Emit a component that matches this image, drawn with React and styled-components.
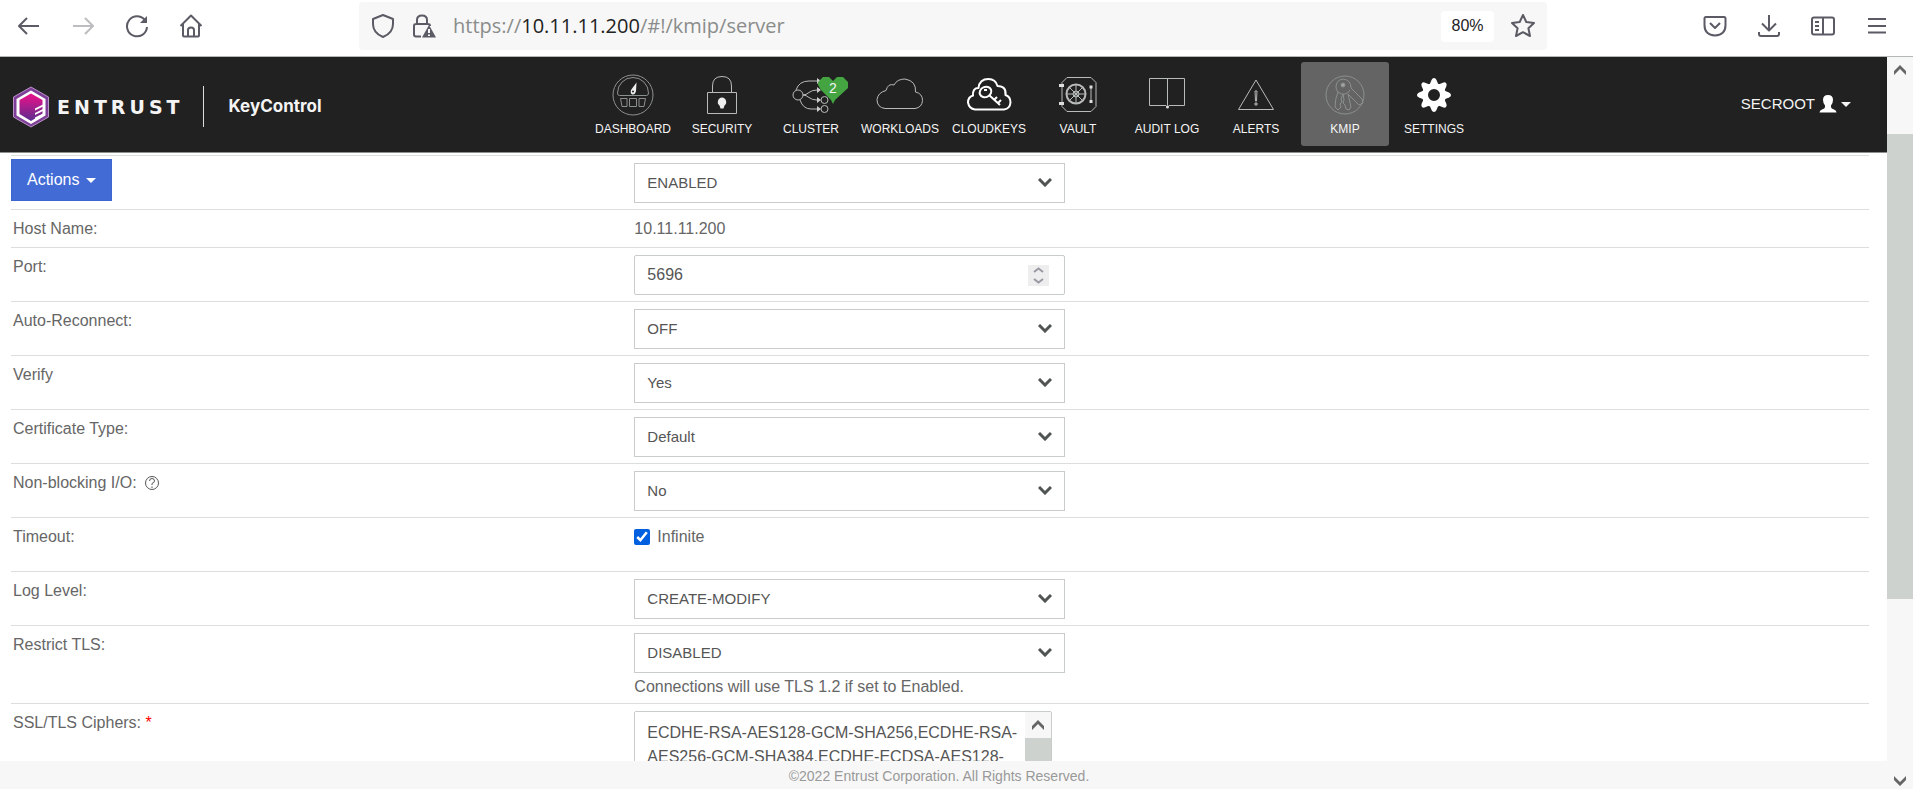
import React, { useState } from 'react';
import styled, { createGlobalStyle } from 'styled-components';

const states = ['ENABLED', 'DISABLED'];
const ciphers = 'ECDHE-RSA-AES128-GCM-SHA256,ECDHE-RSA-AES256-GCM-SHA384,ECDHE-ECDSA-AES128-GCM-SHA256,ECDHE-ECDSA-AES256-GCM-SHA384';

const navItems = [
    { label: 'DASHBOARD', icon: <DashboardIcon /> },
    { label: 'SECURITY', icon: <SecurityIcon /> },
    { label: 'CLUSTER', icon: <ClusterIcon />, badge: 2 },
    { label: 'WORKLOADS', icon: <WorkloadsIcon /> },
    { label: 'CLOUDKEYS', icon: <CloudKeysIcon /> },
    { label: 'VAULT', icon: <VaultIcon /> },
    { label: 'AUDIT LOG', icon: <AuditIcon /> },
    { label: 'ALERTS', icon: <AlertsIcon /> },
    { label: 'KMIP', icon: <KmipIcon />, active: true },
    { label: 'SETTINGS', icon: <SettingsIcon /> },
];

function App() {
    return (
        <Window>
            <GlobalStyle />
            <BrowserBar />
            <Viewport>
                <Page>
                    <Header />
                    <ServerForm />
                    <Footer>©2022 Entrust Corporation. All Rights Reserved.</Footer>
                </Page>
                <ScrollBar before={51} thumb={465} after={164} />
            </Viewport>
        </Window>
    )
}

export default App

function BrowserBar() {
    return (
        <Toolbar>
            <ToolGroup>
                <ToolButton aria-label="Back">
                    <Line d="M22 12H2M10 4L2 12l8 8" />
                </ToolButton>
                <ToolButton aria-label="Forward" $dim>
                    <Line d="M2 12h20M14 4l8 8-8 8" />
                </ToolButton>
                <ToolButton aria-label="Reload">
                    <svg viewBox="0 0 24 24">
                        <path d="M20.5 7A10 10 0 1 0 22 13" />
                        <path d="M22 2v7h-7z" fill="currentColor" stroke="none" />
                    </svg>
                </ToolButton>
                <ToolButton aria-label="Home">
                    <Line d="M1.500 12L12 1.500 22.500 12M4 10v11.500q0 1 1 1h14q1 0 1-1V10M9 22v-6q0-2.500 3-2.500t3 2.500v6" />
                </ToolButton>
            </ToolGroup>
            <AddressBar>
                <ToolButton aria-label="Tracking protection">
                    <Line d="M12 1l10 4v5q0 9-10 13Q2 19 2 10V5z" />
                </ToolButton>
                <ToolButton aria-label="Connection is not secure">
                    <svg viewBox="0 0 24 24">
                        <path d="M5 10V6q0-4.500 5-4.500T15 6v4M9 22.500H4q-2 0-2-2V12q0-2 2-2h12q2 0 2 2" />
                        <path d="M17 11l7 12.500H10z" fill="currentColor" stroke="none" />
                        <path d="M17 15v4M17 20.500v1.500" stroke="#f7f7f7" />
                    </svg>
                </ToolButton>
                <Address>https://<b>10.11.11.200</b>/#!/kmip/server</Address>
                <Zoom>80%</Zoom>
                <ToolButton aria-label="Bookmark this page">
                    <Line d="M12 1l3.300 7 7.700 1-5.600 5.300L19 22l-7-3.800L5 22l1.600-7.700L1 9l7.700-1z" />
                </ToolButton>
            </AddressBar>
            <ToolGroup $end>
                <ToolButton aria-label="Save to Pocket">
                    <Line d="M3 3h18q1.500 0 1.500 1.500V11q0 10-10.500 10.500Q1.500 21 1.500 11V4.500Q1.500 3 3 3zM7 9l5 5 5-5" />
                </ToolButton>
                <ToolButton aria-label="Downloads">
                    <Line d="M12 1v15M5 9.500l7 7 7-7M2 18v2q0 2 2 2h16q2 0 2-2v-2" />
                </ToolButton>
                <ToolButton aria-label="Sidebar">
                    <Line d="M3 3.500h18q2 0 2 2v13q0 2-2 2H3q-2 0-2-2v-13q0-2 2-2zM12 3.500v17M4 8h4M4 12h4M4 16h4" />
                </ToolButton>
                <ToolButton aria-label="Menu">
                    <Line d="M3 5h18M3 12h18M3 18.500h18" />
                </ToolButton>
            </ToolGroup>
        </Toolbar>
    )
}

function Header() {
    return (
        <TopBar>
            <Brand>
                <LogoIcon />
                <WordMark>ENTRUST</WordMark>
                <Product>KeyControl</Product>
            </Brand>
            <Nav>
                {navItems.map((item) => (
                    <NavLink href="#" key={item.label} $active={item.active}>
                        {item.icon}
                        {item.label}
                        {item.badge && (
                            <Badge>
                                <svg viewBox="0 0 30 28">
                                    <path d="M0 9V6L5 1h6l4 4 4-4h6l5 5v6L17 24l-2 4-2-4L3 14z" fill="#43a441" />
                                </svg>
                                <span>{item.badge}</span>
                            </Badge>
                        )}
                    </NavLink>
                ))}
            </Nav>
            <UserMenu>
                SECROOT
                <svg width="18" height="18" viewBox="0 0 18 18">
                    <path d="M9 0q5 0 5 5 0 3-2 5.500V12q0 1.500 3 2.500 2.500 1 2.500 3H.500q0-2 2.500-3 3-1 3-2.500v-1.500Q4 8 4 5q0-5 5-5z" fill="#fff" />
                </svg>
                <Caret />
            </UserMenu>
        </TopBar>
    )
}

function ServerForm() {
    const [ infinite, setInfinite ] = useState(true);

    return (
        <Form onSubmit={(e) => e.preventDefault()}>
            <Row>
                <ActionsCell>
                    <ActionsButton type="button">Actions <Caret /></ActionsButton>
                </ActionsCell>
                <Cell>
                    <SelectBox id="state" label="State" options={states} />
                </Cell>
            </Row>
            <Row>
                <Label as="span">Host Name:</Label>
                <Cell>10.11.11.200</Cell>
            </Row>
            <Row>
                <Label htmlFor="port">Port:</Label>
                <Cell>
                    <Control>
                        <PortInput id="port" type="number" defaultValue="5696" />
                        <Spinner viewBox="0 0 21 21">
                            <path d="M6 7l4.500-3.500L15 7M6 14l4.500 3.500L15 14" />
                        </Spinner>
                    </Control>
                </Cell>
            </Row>
            <Row>
                <Label htmlFor="reconnect">Auto-Reconnect:</Label>
                <Cell><SelectBox id="reconnect" options={['OFF', 'ON']} /></Cell>
            </Row>
            <Row>
                <Label htmlFor="verify">Verify</Label>
                <Cell><SelectBox id="verify" options={['Yes', 'No']} /></Cell>
            </Row>
            <Row>
                <Label htmlFor="cert">Certificate Type:</Label>
                <Cell><SelectBox id="cert" options={['Default', 'Custom']} /></Cell>
            </Row>
            <Row>
                <Label htmlFor="nbio">
                    Non-blocking I/O:
                    <HelpIcon viewBox="0 0 16 16">
                        <circle cx="8" cy="8" r="6.500" />
                        <path d="M5.500 6q0-2.500 2.500-2.500T10.500 6Q10.500 7.500 8 8.500V10M8 11.500V13" />
                    </HelpIcon>
                </Label>
                <Cell><SelectBox id="nbio" options={['No', 'Yes']} /></Cell>
            </Row>
            <Row>
                <Label as="span">Timeout:</Label>
                <Cell>
                    <CheckLabel>
                        <CheckBox checked={infinite} onChange={(e) => setInfinite(e.target.checked)} />
                        Infinite
                    </CheckLabel>
                </Cell>
            </Row>
            <Row>
                <Label htmlFor="log">Log Level:</Label>
                <Cell><SelectBox id="log" options={['CREATE-MODIFY', 'ALL']} /></Cell>
            </Row>
            <Row>
                <Label htmlFor="tls">Restrict TLS:</Label>
                <Cell>
                    <SelectBox id="tls" options={[...states].reverse()} />
                    <Hint>Connections will use TLS 1.2 if set to Enabled.</Hint>
                </Cell>
            </Row>
            <Row>
                <Label htmlFor="ciphers">SSL/TLS Ciphers: <Required>*</Required></Label>
                <Cell>
                    <CipherBox>
                        <CipherText id="ciphers" defaultValue={ciphers} spellCheck={false} />
                        <ScrollBar before={0} thumb={60} after={20} />
                    </CipherBox>
                </Cell>
            </Row>
        </Form>
    )
}

function SelectBox({ id, label, options }) {
    return (
        <Control>
            <Select id={id} aria-label={label}>
                {options.map((option) => <option key={option}>{option}</option>)}
            </Select>
            <Chevron viewBox="0 0 14 9">
                <path d="M1 1l6 6 6-6" />
            </Chevron>
        </Control>
    )
}

function ScrollBar({ before, thumb, after }) {
    return (
        <Track aria-hidden="true">
            <Arrow viewBox="0 0 26 26"><path d="M7 14l6-6 6 6v4l-6-6-6 6z" /></Arrow>
            <TrackPart $grow={before} />
            <TrackPart $grow={thumb} $thumb />
            <TrackPart $grow={after} />
            <Arrow viewBox="0 0 26 26"><path d="M7 13l6 6 6-6v4l-6 6-6-6z" /></Arrow>
        </Track>
    )
}

function Line({ d }) {
    return <svg viewBox="0 0 24 24"><path d={d} /></svg>
}

function LogoIcon() {
    return (
        <svg width="38" height="42" viewBox="0 0 38 42">
            <defs>
                <linearGradient id="gem" x1="0" y1="0" x2="0" y2="1">
                    <stop offset="0.1" stopColor="#e0128a" />
                    <stop offset="1" stopColor="#5b2d90" />
                </linearGradient>
            </defs>
            <path d="M19 1l17.500 10v20L19 41 1.500 31V11z" fill="#7f3f98" stroke="#b993c6" />
            <path d="M19 4.500L33.500 13v16.500L19 38 4.500 29.500V13z" fill="#fff" />
            <path d="M19 7.500L30.500 14v14L19 35 7.500 28V14z" fill="url(#gem)" />
            <path d="M31 18.500l-8 4v2l8-4zM31 23l-8 4v2l8-4zM31 27.500l-8 4v2l8-4z" fill="#fff" />
        </svg>
    )
}

function DashboardIcon() {
    return (
        <NavIcon viewBox="0 0 48 42">
            <circle cx="24" cy="21" r="20" />
            <path d="M8.500 19a15.500 15.500 0 0 1 31 0q0 2.500-2 2.500h-27q-2 0-2-2.500z" />
            <path d="M11.500 24.500H18v8h-5zM20.500 24.500h7v8h-7zM30 24.500h6.500l-1.500 8h-5z" />
            <path d="M27.500 8.500l-5.500 7.500q-1 4 1.500 4.500T27 17z" fill="#eee" stroke="none" />
            <circle cx="24" cy="17.500" r="1" fill="#212121" stroke="none" />
        </NavIcon>
    )
}

function SecurityIcon() {
    return (
        <NavIcon viewBox="0 0 48 42" $bright>
            <path d="M9.500 18.500h29v21h-29zM14.500 18V12q0-9.500 9.500-9.500T33.500 12v6" />
            <path d="M24 23.500a4.500 4.500 0 0 1 2.500 8l-1 3h-3l-1-3a4.500 4.500 0 0 1 2.500-8z" fill="#eee" stroke="none" />
        </NavIcon>
    )
}

function ClusterIcon() {
    return (
        <NavIcon viewBox="0 0 48 42" $bright>
            <circle cx="11" cy="21" r="5" />
            <circle cx="37.500" cy="26" r="3.500" />
            <circle cx="37.500" cy="35" r="3.500" />
            <path d="M9 16q3-9 13-9h8M16 21q3 0 6-2.500t8-2.500M16 21q3 0 6 2.500t8 2.500M13 26q3 9 11 9h7" />
            <path d="M30 4l4 3-4 3zM30 13l4 3-4 3zM30 23l4 3-4 3zM30 32l4 3-4 3z" fill="#ccc" stroke="none" />
        </NavIcon>
    )
}

function WorkloadsIcon() {
    return (
        <NavIcon viewBox="0 0 48 42" $bright>
            <path d="M9 34.500h30q7-1 7.500-8 0-7-7-8.500 1-11-10.500-13-8 0-11 6-6-2-8 5.500-8 2-9 9 0 8 8 9z" />
        </NavIcon>
    )
}

function CloudKeysIcon() {
    return (
        <NavIcon viewBox="0 0 48 42" $bold>
            <path d="M10 35.500h29q6-1 6.500-7 0-6-5-7.500 1-9-8-9-2-7-9-7-9 0-10 9-6 0-5.500 7.500Q3 23 3 28.500q1 6 7 7z" />
            <ellipse cx="20.500" cy="18" rx="6" ry="5" transform="rotate(-25 20.500 18)" />
            <path d="M24 21l11 10M29 26l3-3M33 29l3-3M19 16h3" />
        </NavIcon>
    )
}

function VaultIcon() {
    return (
        <NavIcon viewBox="0 0 48 42" $bright>
            <path d="M13 3.500h24l5 5v24l-5 5H13l-5-5v-24z" />
            <circle cx="22" cy="20" r="9.500" strokeWidth="2" />
            <circle cx="22" cy="20" r="3" />
            <path d="M22 10v20M12 20h20M15 13l14 14M29 13L15 27M37 13v15" />
            <path d="M5 10h5v3H5zM5 28h5v3H5zM35.500 11.500h3v3h-3zM35.500 26h3v3h-3z" fill="#ddd" stroke="none" />
        </NavIcon>
    )
}

function AuditIcon() {
    return (
        <NavIcon viewBox="0 0 48 42" $bright>
            <path d="M6.500 4.500h35v27H26l-1.500 1.500L23 31.500H6.500zM24.500 4.500v27" />
            <circle cx="24.500" cy="33" r="1.500" fill="#ddd" stroke="none" />
        </NavIcon>
    )
}

function AlertsIcon() {
    return (
        <NavIcon viewBox="0 0 48 42" $bright>
            <path d="M24 6l17.500 29.500h-35zM23 17h2l-.500 10h-1zM23 29h2v2h-2z" />
        </NavIcon>
    )
}

function KmipIcon() {
    return (
        <NavIcon viewBox="0 0 48 42">
            <circle cx="24" cy="21" r="19" />
            <path d="M22 5q-7 1-7 8 0 3 2 5-3 7-3 15l3 3 3-3-1-3 2-2-1-3 2-5 1 6-1 3 2 2 1 4 3 1 2-3-3-13 11 11 4-2-1-4-11-11q0-8-8-9z" />
            <path d="M17 18q3 3 7 2t5-4" />
            <circle cx="22" cy="11" r="2" fill="#a0a5a2" />
        </NavIcon>
    )
}

function SettingsIcon() {
    return (
        <NavIcon viewBox="0 0 48 42">
            <circle cx="24" cy="21" r="9" stroke="#fff" strokeWidth="6" />
            {[0, 45, 90, 135, 180, 225, 270, 315].map((angle) => (
                <path
                    key={angle}
                    d="M19.500 11l2-5q1-2 2.500-2t2.500 2l2 5z"
                    fill="#fff"
                    stroke="none"
                    transform={`rotate(${angle} 24 21)`}
                />
            ))}
        </NavIcon>
    )
}

const GlobalStyle = createGlobalStyle`
    * {
        box-sizing: border-box;
    }

    body {
        margin: 0;
        background: #fff;
        color: #666;
        font: 16px/24px "Liberation Sans", Arial, sans-serif;
    }

    button, input, select, textarea {
        font: inherit;
        color: inherit;
    }
`;

const Window = styled.div`
    height: 100vh;
    display: flex;
    flex-direction: column;
    padding-bottom: 18px;
`;

const Toolbar = styled.div`
    display: flex;
    align-items: flex-start;
    height: 57px;
    padding-top: 2px;
    border-bottom: 1px solid #b4b9b6;
`;

const ToolGroup = styled.div`
    display: flex;
    align-items: center;
    gap: 30px;
    height: 48px;
    width: 359px;
    padding: 0 24px 0 17px;
    ${(props) => props.$end && 'width: 366px; justify-content: flex-end;'}
`;

const ToolButton = styled.button`
    width: 24px;
    height: 24px;
    padding: 0;
    border: 0;
    background: none;
    color: #5b5b66;
    opacity: ${(props) => (props.$dim ? 0.4 : 1)};

    svg {
        display: block;
        width: 24px;
        height: 24px;
        fill: none;
        stroke: currentColor;
        stroke-width: 2;
        stroke-linejoin: round;
    }
`;

const AddressBar = styled.div`
    flex: 1;
    display: flex;
    align-items: center;
    gap: 17px;
    height: 48px;
    padding: 0 12px;
    border-radius: 4px;
    background: #f7f7f7;
`;

const Address = styled.div`
    flex: 1;
    font-family: "Open Sans", "Noto Sans", sans-serif;
    font-size: 20px;
    color: #8a8d8b;

    b {
        font-weight: 400;
        color: #222;
    }
`;

const Zoom = styled.button`
    width: 53px;
    height: 31px;
    padding: 0;
    border: 0;
    border-radius: 4px;
    background: #fff;
    color: #222;
    font-size: 16px;
`;

const Viewport = styled.div`
    flex: 1;
    min-height: 0;
    display: flex;
`;

const Page = styled.div`
    flex: 1;
    min-width: 0;
    display: flex;
    flex-direction: column;
`;

const TopBar = styled.header`
    display: flex;
    height: 96px;
    flex-shrink: 0;
    padding: 5px 36px 0 12px;
    border-bottom: 1px solid #8c908e;
    background: #212121;
    color: #f4f4f4;
`;

const Brand = styled.div`
    display: flex;
    align-items: center;
    width: 577px;
    padding-bottom: 5px;
    margin-top: 5px;
    height: 84px;
`;

const WordMark = styled.span`
    margin-left: 7px;
    font-family: "DejaVu Sans", sans-serif;
    font-weight: 700;
    font-size: 19px;
    letter-spacing: 4px;
`;

const Product = styled.span`
    margin-left: 19px;
    padding-left: 25px;
    border-left: 1px solid #ddd;
    font-family: Inter, sans-serif;
    font-weight: 700;
    font-size: 17px;
    line-height: 41px;
`;

const Nav = styled.nav`
    display: flex;
    gap: 1px;
`;

const NavLink = styled.a`
    position: relative;
    display: flex;
    flex-direction: column;
    align-items: center;
    gap: 5px;
    width: 88px;
    height: 84px;
    padding-top: 12px;
    border-radius: 3px;
    background: ${(props) => (props.$active ? '#646464' : 'transparent')};
    color: #f4f4f4;
    font-size: 12px;
    line-height: 16px;
    text-decoration: none;
`;

const NavIcon = styled.svg`
    width: 48px;
    height: 42px;
    fill: none;
    stroke: ${(props) => (props.$bold ? '#fff' : props.$bright ? '#b8bcb9' : '#8b918d')};
    stroke-width: ${(props) => (props.$bold ? 2 : 1)};
    stroke-linejoin: round;
`;

const Badge = styled.span`
    position: absolute;
    top: 14px;
    left: 51px;
    width: 30px;
    height: 28px;

    svg {
        display: block;
    }

    span {
        position: absolute;
        inset: 4px 0 auto;
        text-align: center;
        font-size: 14px;
    }
`;

const UserMenu = styled.button`
    display: flex;
    align-items: center;
    gap: 4px;
    height: 84px;
    margin-left: auto;
    padding: 0;
    border: 0;
    background: none;
    font-size: 15px;
`;

const Caret = styled.i`
    border: 5px solid transparent;
    border-top-color: currentColor;
    border-bottom: 0;
`;

const Form = styled.form`
    flex: 1;
    min-height: 0;
    overflow: hidden;
    padding: 2px 18px 0 11px;
`;

const Row = styled.div`
    display: grid;
    grid-template-columns: 1fr 2fr;
    padding: 7px 0 6px;
    border-top: 1px solid #dcdedd;
`;

const Cell = styled.div`
    padding-left: 4px;
`;

const Label = styled.label`
    padding-left: 2px;
`;

const ActionsCell = styled.div`
    margin: -4px 0;
`;

const ActionsButton = styled.button`
    display: flex;
    align-items: center;
    gap: 7px;
    height: 42px;
    padding: 0 15px;
    border: 1px solid #3c66d0;
    background: #426bd6;
    color: #fff;
`;

const Control = styled.div`
    position: relative;
    max-width: 431px;
    height: 40px;
`;

const Select = styled.select`
    appearance: none;
    display: block;
    width: 100%;
    height: 40px;
    padding: 0 40px 0 12px;
    border: 1px solid #c8cdca;
    border-radius: 0;
    background: #fff;
    color: #555;
    font-size: 15px;
`;

const Chevron = styled.svg`
    position: absolute;
    top: 15px;
    right: 13px;
    width: 14px;
    height: 9px;
    fill: none;
    stroke: #505552;
    stroke-width: 3;
    pointer-events: none;
`;

const PortInput = styled.input`
    appearance: textfield;
    display: block;
    width: 100%;
    height: 40px;
    padding: 0 40px 0 12px;
    border: 1px solid #c8cdca;
    border-radius: 2px;
    color: #555;
`;

const Spinner = styled.svg`
    position: absolute;
    top: 10px;
    right: 16px;
    width: 21px;
    height: 21px;
    background: #eee;
    fill: none;
    stroke: #9a9aa5;
    stroke-width: 2;
`;

const HelpIcon = styled.svg`
    width: 16px;
    height: 16px;
    margin-left: 7px;
    vertical-align: -3px;
    fill: none;
    stroke: #555;
    stroke-width: 1;
`;

const CheckLabel = styled.label`
    display: flex;
    align-items: center;
    gap: 7px;
    height: 40px;
    padding-bottom: 16px;
`;

const CheckBox = styled.input.attrs({ type: 'checkbox' })`
    width: 16px;
    height: 16px;
    margin: 0;
    accent-color: #0060df;
`;

const Hint = styled.div`
    margin-top: 4px;
    font-size: 16px;
    line-height: 20px;
`;

const Required = styled.span`
    color: #f00;
`;

const CipherBox = styled.div`
    display: flex;
    max-width: 418px;
    height: 112px;
    border: 1px solid #c8cdca;
    border-radius: 2px;
`;

const CipherText = styled.textarea`
    flex: 1;
    min-width: 0;
    padding: 9px 4px 0 12px;
    border: 0;
    resize: none;
    overflow: hidden;
    color: #555;
    line-height: 24px;
`;

const Track = styled.div`
    display: flex;
    flex-direction: column;
    width: 26px;
    flex-shrink: 0;
    background: #f7f7f7;
`;

const TrackPart = styled.div`
    flex: ${(props) => props.$grow} 1 0;
    background: ${(props) => (props.$thumb ? '#cdd2ce' : 'transparent')};
`;

const Arrow = styled.svg`
    width: 26px;
    height: 26px;
    fill: #666;
    flex-shrink: 0;
`;

const Footer = styled.footer`
    height: 28px;
    flex-shrink: 0;
    padding-right: 9px;
    background: #f7f7f7;
    color: #999;
    font-size: 14px;
    line-height: 30px;
    text-align: center;
`;
